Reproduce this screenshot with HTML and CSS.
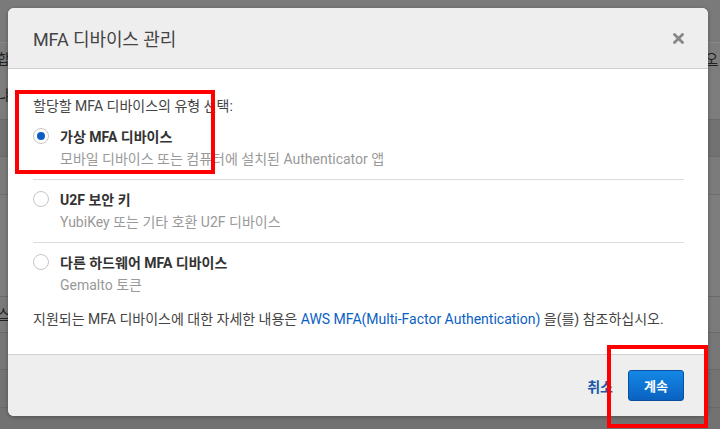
FILE: index.html
```html
<!DOCTYPE html>
<html lang="ko">
<head>
<meta charset="utf-8">
<link rel="stylesheet" href="styles.css">
</head>
<body>
<div class="page">
  <div class="row r1"></div>
  <div class="row r2"><span class="l t1">합</span><span class="r">오</span></div>
  <div class="row r3"><span class="l t2">냐</span></div>
  <div class="row r4"></div>
  <div class="row r5"></div>
  <div class="row r6"><span class="l t3">.</span></div>
  <div class="row r7"><span class="l t4">스</span></div>
  <div class="row r8"></div>
  <div class="row r9"></div>
  <div class="row r10"></div>
</div>

<div class="modal">
  <div class="modal-header">
    <h2 class="title">MFA 디바이스 관리</h2>
    <svg class="close" width="11" height="11" viewBox="0 0 11 11" aria-hidden="true"><path d="M1.5 1.5 L9.5 9.5 M9.5 1.5 L1.5 9.5" stroke="#878787" stroke-width="2.8" stroke-linecap="round"/></svg>
  </div>
  <div class="modal-body">
    <p class="prompt">할당할 MFA 디바이스의 유형 선택:</p>
    <div class="option">
      <span class="radio checked"></span>
      <div class="opt-text">
        <div class="opt-title">가상 MFA 디바이스</div>
        <div class="opt-desc">모바일 디바이스 또는 컴퓨터에 설치된 Authenticator 앱</div>
      </div>
    </div>
    <div class="option">
      <span class="radio"></span>
      <div class="opt-text">
        <div class="opt-title">U2F 보안 키</div>
        <div class="opt-desc">YubiKey 또는 기타 호환 U2F 디바이스</div>
      </div>
    </div>
    <div class="option last">
      <span class="radio"></span>
      <div class="opt-text">
        <div class="opt-title">다른 하드웨어 MFA 디바이스</div>
        <div class="opt-desc">Gemalto 토큰</div>
      </div>
    </div>
    <p class="note">지원되는 MFA 디바이스에 대한 자세한 내용은 <a class="link">AWS MFA(Multi-Factor Authentication)</a> 을(를) 참조하십시오.</p>
  </div>
  <div class="modal-footer">
    <a class="cancel">취소</a>
    <button class="primary">계속</button>
  </div>
</div>

<div class="hl hl1"></div>
<div class="hl hl2"></div>
</body>
</html>
```

FILE: styles.css
```css
* { box-sizing: border-box; }
html, body { margin: 0; padding: 0; }
body {
  width: 720px;
  height: 429px;
  overflow: hidden;
  background: #7b7b7b;
  font-family: Roboto, "Noto Sans CJK KR", sans-serif;
  position: relative;
}
.page { display: flex; flex-direction: column; }
.row {
  display: flex;
  justify-content: space-between;
  align-items: flex-start;
  color: #222;
  font-size: 14px;
  line-height: 16px;
  border-bottom: 1px solid #6c6c6c;
  background: #7b7b7b;
  flex: none;
}
.row .l { margin-left: -3px; }
.row .r { margin-right: 2px; text-decoration: underline; margin-top: 8px; }
.t1 { margin-top: 8px; }
.t2 { margin-top: 4px; }
.t3 { margin-top: 25px; }
.t4 { margin-top: 9px; text-decoration: underline; }
.r1 { height: 43px; background: #7a7a7a; border-bottom-color: #888; }
.r2 { height: 40px; background: #7d7d7d; border-bottom: none; }
.r3 { height: 37px; background: #7d7d7d; border-bottom-color: #6a6a6a; }
.r4 { height: 37px; background: #727272; border-bottom-color: #6a6a6a; }
.r5 { height: 38px; background: #7b7b7b; border-bottom-color: #6f6f6f; }
.r6 { height: 102px; background: #7d7d7d; border-bottom-color: #6a6a6a; }
.r7 { height: 36px; background: #7b7b7b; border-bottom-color: #6a6a6a; }
.r8 { height: 37px; background: #777; border-bottom-color: #6a6a6a; }
.r9 { height: 38px; background: #737373; border-bottom-color: #6a6a6a; }
.r10 { height: 21px; background: #727272; border-bottom: none; }

.modal {
  position: absolute;
  left: 8px;
  top: 8px;
  width: 700px;
  height: 408px;
  background: #fff;
  border-radius: 6px;
  box-shadow: 0 1px 4px rgba(0,0,0,0.3);
  display: flex;
  flex-direction: column;
  overflow: hidden;
}
.modal-header {
  height: 61px;
  background: #eeeeee;
  border-bottom: 1px solid #cfcfcf;
  display: flex;
  align-items: center;
  justify-content: space-between;
  padding: 0 24px 0 25px;
  flex: none;
}
.title {
  margin: 0;
  font-weight: 400;
  font-size: 18px;
  color: #444;
  letter-spacing: -0.1px;
}
.close { display: block; margin-top: 1px; }
.modal-body {
  flex: 1;
  padding: 27px 24px 0 25px;
  font-size: 14px;
  color: #444;
}
.prompt {
  margin: 0 0 1px;
  line-height: 20px;
}
.option {
  display: flex;
  align-items: flex-start;
  gap: 11px;
  border-bottom: 1px solid #dcdcdc;
  padding: 10px 0 9px;
}
.option.last { border-bottom: none; }
.radio {
  width: 16px;
  height: 16px;
  border: 1px solid #c6c6c6;
  border-radius: 50%;
  background: #fff;
  margin-top: 1px;
  flex: none;
  position: relative;
}
.radio.checked::after {
  content: "";
  position: absolute;
  left: 3px;
  top: 3px;
  width: 8px;
  height: 8px;
  border-radius: 50%;
  background: #0a5fc4;
}
.opt-title {
  font-weight: 700;
  color: #333;
  line-height: 21px;
}
.opt-desc {
  color: #999;
  line-height: 22px;
}
.note {
  margin: 4px 0 0;
  line-height: 20px;
  color: #444;
}
.link { color: #0a5fc4; text-decoration: none; }
.modal-footer {
  height: 62px;
  background: #eeeeee;
  border-top: 1px solid #d0d0d0;
  display: flex;
  align-items: center;
  justify-content: flex-end;
  padding: 0 24px 0 0;
  gap: 15px;
  flex: none;
}
.cancel {
  color: #1a5aa8;
  font-weight: 700;
  font-size: 14px;
}
.primary {
  width: 56px;
  height: 31px;
  border: 1px solid #0b4f9c;
  border-radius: 3px;
  background: linear-gradient(#1488e6, #0a62c0);
  color: #fff;
  font-weight: 700;
  font-size: 13px;
  font-family: Roboto, "Noto Sans CJK KR", sans-serif;
  padding: 0;
}
.hl {
  position: absolute;
  border: 4px solid #ff0000;
}
.hl1 { left: 15px; top: 90px; width: 200px; height: 84px; }
.hl2 { left: 607px; top: 345px; width: 101px; height: 83px; }
```
